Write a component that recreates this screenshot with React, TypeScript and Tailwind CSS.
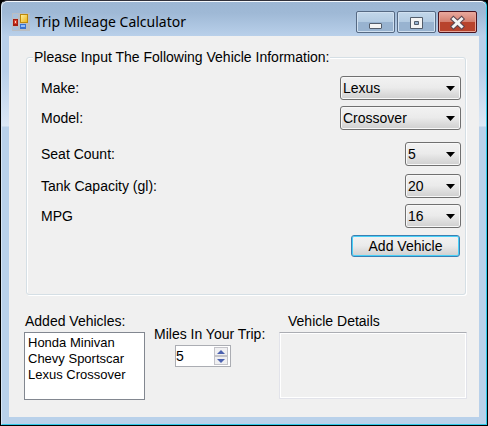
import type { ReactNode } from "react";

function Field({ id, label, options, className, wide = false }: { id: string; label: string; options: string[]; className: string; wide?: boolean }) {
  return (
    <div className={`flex items-center justify-between ${className}`}>
      <label htmlFor={id}>{label}</label>
      <div className={`relative h-6 ${wide ? "w-[121px]" : "w-14"}`}>
        <select
          id={id}
          className="h-6 w-full appearance-none rounded-[3px] border border-[#707070] bg-linear-to-b from-[#f2f2f2] from-0% via-[#ebebeb] via-48% to-[#cfcfcf] pl-0.5 pr-5 text-sm text-black shadow-[inset_0_0_0_1px_#f8f8f8] outline-none"
        >
          {options.map((o) => (
            <option key={o}>{o}</option>
          ))}
        </select>
        <svg className="pointer-events-none absolute right-1.5 top-2.5" width="9" height="5" viewBox="0 0 9 5" aria-hidden="true">
          <path d="M0 0h9L4.5 5z" fill="#000" />
        </svg>
      </div>
    </div>
  );
}

function CaptionButton({ label, close = false, children }: { label: string; close?: boolean; children: ReactNode }) {
  return (
    <button
      type="button"
      aria-label={label}
      className={`flex h-[22px] w-[39px] items-center justify-center rounded-[2px] border ${
        close
          ? "border-[#4a1420] bg-linear-to-b from-[#e9a99f] from-0% via-[#d4806f] via-48% to-[#b8432c] to-52% shadow-[inset_0_0_0_1px_#e8a598]"
          : "border-[#566a84] bg-linear-to-b from-[#c3d7ea] from-0% via-[#b3cbe2] via-48% to-[#98b3d0] to-52% shadow-[inset_0_0_0_1px_#d0e0f0]"
      }`}
    >
      {children}
    </button>
  );
}

function AppIcon() {
  return (
    <svg className="shrink-0" width="18" height="18" viewBox="0 0 18 18" aria-hidden="true" shapeRendering="crispEdges">
      <defs>
        <linearGradient id="gold" x1="0" y1="0" x2="1" y2="1">
          <stop offset="0" stopColor="#ffef9a" />
          <stop offset="1" stopColor="#edb51c" />
        </linearGradient>
      </defs>
      <path d="M0 0h18v18H0z" fill="#b9bec4" />
      <path d="M1 1h5v4H1zM1 14h5v3H1z" fill="#a8c1dc" />
      <path d="M1 6h5v7H1z" fill="#a51d10" />
      <path d="M2 7h3v4H2z" fill="#d5402b" />
      <path d="M3 8h1v2H3z" fill="#ffd0c0" />
      <path d="M8 1h8v9H8z" fill="#bd880a" />
      <path d="M9 2h6v7H9z" fill="url(#gold)" />
      <path d="M8 11h6v5H8z" fill="#3972cf" />
      <path d="M9 12h4v2H9z" fill="#8fbafa" />
    </svg>
  );
}

const stepClass = "flex h-[9px] w-[14px] items-center justify-center border border-[#c3c3c9] bg-[#f0f0f2]";

export default function App() {
  return (
    <div className="flex min-h-screen bg-black px-px pb-px font-['Liberation_Sans',Arial,sans-serif] text-sm text-black">
      <main className="flex flex-1 flex-col rounded-t-[6px] border border-t-[#30303a] border-r-[#2fc8e8] border-b-[#2fc8e8] border-l-[#d7e6f5] bg-[linear-gradient(to_bottom,#9cb6d3_0,#9fb9d6_12px,#b9d0ea_35px,#b9d0ea_70px,#dce8f5_125px,#b9d1ea_126px)] px-[7px] pb-[7px] shadow-[inset_0_1px_0_#f4f8fc]">
        <header className="flex h-[35px] items-center pl-[3px] pt-[7px]">
          <AppIcon />
          <h1 className="ml-[5px] flex-1 font-['Noto_Sans','Open_Sans',sans-serif] text-sm">Trip Mileage Calculator</h1>
          <div className="mr-0.5 flex gap-0.5">
            <CaptionButton label="Minimize">
              <svg width="15" height="15" viewBox="0 0 15 15">
                <rect x="1.5" y="8.5" width="12" height="5" rx="0.5" fill="#f4f4f4" stroke="#535d6b" />
              </svg>
            </CaptionButton>
            <CaptionButton label="Maximize">
              <svg width="15" height="15" viewBox="0 0 15 15">
                <path fillRule="evenodd" d="M1.5 2.5h12v11h-12zM5.5 6.5v3h4v-3z" fill="#f4f4f4" stroke="#535d6b" />
              </svg>
            </CaptionButton>
            <CaptionButton label="Close" close>
              <svg width="15" height="15" viewBox="0 0 15 15">
                <path d="M3.5 4l8 7.5M11.5 4l-8 7.5" stroke="#5c4650" strokeWidth="5" strokeLinecap="square" />
                <path d="M3.5 4l8 7.5M11.5 4l-8 7.5" stroke="#f4f4f4" strokeWidth="3" strokeLinecap="square" />
              </svg>
            </CaptionButton>
          </div>
        </header>

        <form className="flex-1 bg-[#f0f0f0] px-[17px] pt-3" onSubmit={(e) => e.preventDefault()}>
          <fieldset className="mr-[-4px] h-[247px] min-w-0 rounded-[3px] border border-[#d5dfe5] pl-[14px] pr-1 shadow-[1px_1px_0_#fff,inset_1px_1px_0_#fff]">
            <legend className="-ml-2 bg-[#f0f0f0] px-px leading-[18px]">Please Input The Following Vehicle Information:</legend>
            <Field id="make" label="Make:" options={["Lexus", "Honda", "Chevy"]} wide className="mt-2.5" />
            <Field id="model" label="Model:" options={["Crossover", "Minivan", "Sportscar"]} wide className="mt-1.5" />
            <Field id="seats" label="Seat Count:" options={["5", "2", "7"]} className="mt-3" />
            <Field id="tank" label="Tank Capacity (gl):" options={["20", "15", "25"]} className="mt-2" />
            <Field id="mpg" label="MPG" options={["16", "20", "30"]} className="mt-1.5" />
            <button
              type="submit"
              className="mt-[7px] mr-px ml-auto block h-[22px] w-[109px] rounded-[3px] border border-[#3c7fb1] bg-linear-to-b from-[#f2f2f2] via-[#ebebeb] via-48% to-[#cfcfcf] leading-5 shadow-[inset_0_0_0_1px_#48d0f8]"
            >
              Add Vehicle
            </button>
          </fieldset>

          <div className="-ml-0.5 mr-[-5px] mt-[17px] flex items-start">
            <div className="w-[121px]">
              <label htmlFor="added" className="block pl-px leading-[18px]">
                Added Vehicles:
              </label>
              <select
                id="added"
                size={4}
                className="mt-0.5 block h-[68px] w-full appearance-none overflow-hidden border border-[#828790] bg-white px-px py-0.5 text-[13px] leading-4 outline-none"
              >
                <option className="min-h-4 px-0.5 py-0 leading-4">Honda Minivan</option>
                <option className="min-h-4 px-0.5 py-0 leading-4">Chevy Sportscar</option>
                <option className="min-h-4 px-0.5 py-0 leading-4">Lexus Crossover</option>
              </select>
            </div>

            <div className="ml-[9px] mt-[13px] w-[114px]">
              <label htmlFor="miles" className="block whitespace-nowrap leading-[18px]">
                Miles In Your Trip:
              </label>
              <div className="ml-[21px] mt-0.5 flex h-[22px] w-14 items-center border border-[#abadb3] bg-white pr-0.5">
                <input
                  id="miles"
                  type="text"
                  inputMode="numeric"
                  defaultValue="5"
                  className="min-w-0 flex-1 bg-transparent leading-[18px] outline-none"
                />
                <div className="flex flex-col">
                  <button type="button" aria-label="Increase" className={stepClass}>
                    <svg width="8" height="4" viewBox="0 0 8 4">
                      <path d="M0 4h8L4 0z" fill="#4c62b0" />
                    </svg>
                  </button>
                  <button type="button" aria-label="Decrease" className={stepClass}>
                    <svg width="8" height="4" viewBox="0 0 8 4">
                      <path d="M0 0h8L4 4z" fill="#4c62b0" />
                    </svg>
                  </button>
                </div>
              </div>
            </div>

            <div className="ml-[11px] flex-1">
              <label htmlFor="details" className="block pl-[9px] leading-[18px]">
                Vehicle Details
              </label>
              <textarea
                id="details"
                readOnly
                className="mt-0.5 block h-[67px] w-full resize-none border border-[#e2e3ea] border-t-[#abadb3] bg-[#f0f0f0] p-1 shadow-[inset_0_0_0_1px_#fff] outline-none"
              />
            </div>
          </div>
        </form>
      </main>
    </div>
  );
}
